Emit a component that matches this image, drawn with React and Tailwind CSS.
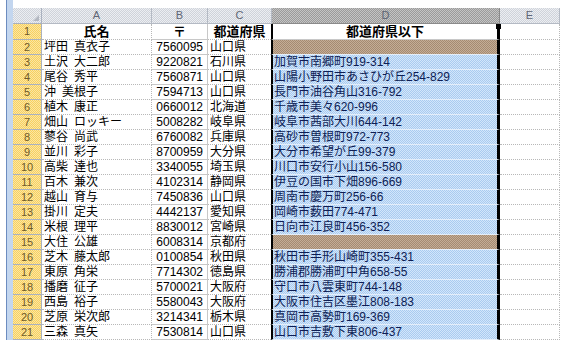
import React from 'react';

const rows = [
  ['坪田\u2002真衣子', '7560095', '山口県', null],
  ['土沢\u2002大二郎', '9220821', '石川県', '加賀市南郷町919-314'],
  ['尾谷\u2002秀平', '7560871', '山口県', '山陽小野田市あさひが丘254-829'],
  ['沖\u2002美根子', '7594713', '山口県', '長門市油谷角山316-792'],
  ['植木\u2002康正', '0660012', '北海道', '千歳市美々620-996'],
  ['畑山\u2002ロッキー', '5008282', '岐阜県', '岐阜市茜部大川644-142'],
  ['蓼谷\u2002尚武', '6760082', '兵庫県', '高砂市曽根町972-773'],
  ['並川\u2002彩子', '8700959', '大分県', '大分市希望が丘99-379'],
  ['高柴\u2002達也', '3340055', '埼玉県', '川口市安行小山156-580'],
  ['百木\u2002兼次', '4102314', '静岡県', '伊豆の国市下畑896-669'],
  ['越山\u2002育与', '7450836', '山口県', '周南市慶万町256-66'],
  ['掛川\u2002定夫', '4442137', '愛知県', '岡崎市薮田774-471'],
  ['米根\u2002理平', '8830012', '宮崎県', '日向市江良町456-352'],
  ['大住\u2002公雄', '6008314', '京都府', null],
  ['芝木\u2002藤太郎', '0100854', '秋田県', '秋田市手形山崎町355-431'],
  ['東原\u2002角栄', '7714302', '徳島県', '勝浦郡勝浦町中角658-55'],
  ['播磨\u2002征子', '5700021', '大阪府', '守口市八雲東町744-148'],
  ['西島\u2002裕子', '5580043', '大阪府', '大阪市住吉区墨江808-183'],
  ['芝原\u2002栄次郎', '3214341', '栃木県', '真岡市高勢町169-369'],
  ['三森\u2002真矢', '7530814', '山口県', '山口市吉敷下東806-437'],
];

const font = "font-['Liberation_Sans','Noto_Sans_CJK_JP',sans-serif]";

// dithered fills, like the GIF
const yellow = 'bg-[image:repeating-conic-gradient(#f7d060_0_25%,#fbe6a2_0_50%)] bg-[length:2px_2px]';
const blue = 'bg-[image:repeating-conic-gradient(#aacbef_0_25%,#d2e6fb_0_50%)] bg-[length:2px_2px]';
const brown = 'bg-[image:repeating-conic-gradient(#a48a72_0_25%,#c4ad96_0_50%)] bg-[length:2px_2px]';
const headGray = 'bg-[image:repeating-conic-gradient(#cfd3da_0_25%,#eceef2_0_50%)] bg-[length:2px_2px]';
const headDark = 'bg-[image:repeating-conic-gradient(#9a9a9a_0_25%,#c4c4c4_0_50%)] bg-[length:2px_2px]';

const HeaderRow = () => (
  <div className="flex h-[16px] text-[11px] text-[#5f6675] leading-none">
    <div className={`relative w-[29px] border-r border-b border-[#a9b1bf] ${headGray}`}>
      <div className="absolute right-[2px] bottom-[2px] w-0 h-0 border-l-[6px] border-l-transparent border-b-[6px] border-b-[#b3b8c1]" />
    </div>
    <div className={`flex w-[110px] items-center justify-center border-r border-b border-[#b4bac4] ${headGray}`}>A</div>
    <div className={`flex w-[56px] items-center justify-center border-r border-b border-[#b4bac4] ${headGray}`}>B</div>
    <div className={`flex w-[64px] items-center justify-center border-r border-b border-[#b4bac4] ${headGray}`}>C</div>
    <div className={`flex w-[228px] items-center justify-center border-r border-b border-[#8a8a8a] ${headDark}`}>D</div>
    <div className={`flex w-[60px] items-center justify-center border-r border-b border-[#b4bac4] ${headGray}`}>E</div>
  </div>
);

const TitleRow = () => (
  <div className="flex h-[16px] text-[13px] font-bold text-black leading-none">
    <div className={`flex w-[29px] items-center justify-center border-r border-b border-[#a9b1bf] text-[11px] font-normal text-[#6e5a2a] ${yellow}`}>1</div>
    <div className="flex w-[110px] items-center justify-center border-r border-b border-dotted border-[#b8b8b8]">氏名</div>
    <div className="flex w-[56px] items-center justify-center border-r border-b border-[#c8c8c8]">〒</div>
    <div className="flex w-[63px] items-center justify-center border-b border-dotted border-[#b8b8b8]">都道府県</div>
    <div className="relative flex w-[229px] items-center justify-center border-l-2 border-r-[3px] border-b border-l-black border-r-black border-b-[#c8c8c8] bg-white">
      都道府県以下
      <div className="absolute -right-[4px] top-[0px] w-[5px] h-[5px] bg-black" />
    </div>
    <div className="w-[60px] border-r border-b border-dotted border-[#b8b8b8]" />
  </div>
);

const DataRow = ({ n, name, zip, pref, addr }) => (
  <div className="flex h-[15px] text-[12px] leading-none">
    <div className={`flex w-[29px] items-center justify-center border-r border-b border-[#a9b1bf] text-[11px] text-[#6e5a2a] ${yellow}`}>{n}</div>
    <div className="flex w-[110px] items-center pl-[2px] border-r border-b border-dotted border-[#b8b8b8] text-black">{name}</div>
    <div className="flex w-[56px] items-center justify-end pr-[4px] border-r border-b border-[#c8c8c8] text-black">{zip}</div>
    <div className="flex w-[63px] items-center pl-[2px] border-b border-dotted border-[#b8b8b8] text-black">{pref}</div>
    <div className={`flex w-[229px] items-center pl-[1px] border-l-2 border-r-[3px] border-b border-l-black border-r-black border-b-[#e4eefa] text-[#0d1d55] ${addr ? blue : brown}`}>
      {addr}
    </div>
    <div className="w-[60px] border-r border-b border-dotted border-[#b8b8b8]" />
  </div>
);

export default function App() {
  return (
    <div className={`flex w-[567px] h-[340px] overflow-hidden bg-white ${font}`}>
      <div className="w-[6px]" />
      <div className="w-[7px] border-l border-[#6c8cc0] bg-[#c3d6ef]" />
      <div className="flex flex-col pt-[8px]">
        <HeaderRow />
        <TitleRow />
        {rows.map((r, i) => (
          <DataRow key={i} n={i + 2} name={r[0]} zip={r[1]} pref={r[2]} addr={r[3]} />
        ))}
      </div>
    </div>
  );
}
